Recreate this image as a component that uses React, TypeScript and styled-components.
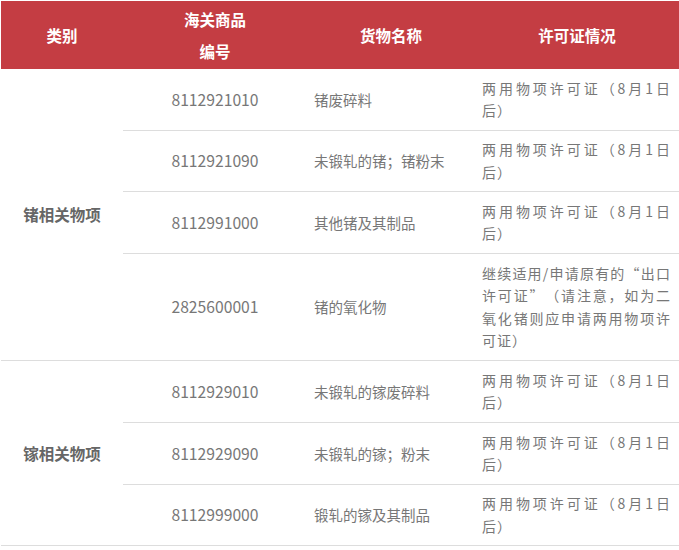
import React from "react";
import styled, { createGlobalStyle } from "styled-components";

const Global = createGlobalStyle`
  html, body { margin: 0; padding: 0; background: #fff; }
  body { font-family: "Microsoft YaHei", "Noto Sans CJK SC", sans-serif; text-spacing-trim: space-all; }
`;

const Wrap = styled.div`
  padding: 1px 0 0 1px;
  width: 679px;
  box-sizing: border-box;
`;

const Table = styled.table`
  width: 678px;
  border-collapse: collapse;
  table-layout: fixed;
`;

const HeadCell = styled.th`
  background: #c43d43;
  color: #fff;
  font-weight: bold;
  font-size: 15.5px;
  line-height: 32px;
  height: 68px;
  padding: 0;
  text-align: center;
  vertical-align: middle;
`;

const CatCell = styled.td`
  text-align: center;
  vertical-align: middle;
  font-weight: bold;
  font-size: 15.5px;
  color: #666;
  border-bottom: 1px solid #ddd;
  padding: 0;
`;

const CodeCell = styled.td`
  text-align: center;
  vertical-align: middle;
  font-size: 15.7px;
  color: #777;
  border-bottom: 1px solid #ddd;
  padding: 7px 0;
`;

const NameCell = styled.td`
  text-align: left;
  vertical-align: middle;
  font-size: 14.5px;
  color: #777;
  border-bottom: 1px solid #ddd;
  padding: 7px 6px 7px 7px;
`;

const LicCell = styled.td`
  text-align: justify;
  vertical-align: middle;
  font-family: "Noto Sans CJK SC", sans-serif;
  font-size: 14px;
  letter-spacing: 1px;
  line-height: 22.5px;
  text-spacing-trim: space-all;
  color: #777;
  border-bottom: 1px solid #ddd;
  padding: 7px 8px 7px 7px;
`;

const LIC = "两用物项许可证（8月1日后）";

type Item = { code: string; name: string; lic: string; h: number };

const groups: { cat: string; items: Item[] }[] = [
  {
    cat: "锗相关物项",
    items: [
      { code: "8112921010", name: "锗废碎料", lic: LIC, h: 61 },
      { code: "8112921090", name: "未锻轧的锗；锗粉末", lic: LIC, h: 61 },
      { code: "8112991000", name: "其他锗及其制品", lic: LIC, h: 62 },
      {
        code: "2825600001",
        name: "锗的氧化物",
        lic: "继续适用/申请原有的“出口许可证”（请注意，如为二氧化锗则应申请两用物项许可证）",
        h: 107,
      },
    ],
  },
  {
    cat: "镓相关物项",
    items: [
      { code: "8112929010", name: "未锻轧的镓废碎料", lic: LIC, h: 62 },
      { code: "8112929090", name: "未锻轧的镓；粉末", lic: LIC, h: 62 },
      { code: "8112999000", name: "锻轧的镓及其制品", lic: LIC, h: 61 },
    ],
  },
];

export default function App() {
  return (
    <Wrap>
      <Global />
      <Table>
        <colgroup>
          <col style={{ width: 122 }} />
          <col style={{ width: 184 }} />
          <col style={{ width: 168 }} />
          <col style={{ width: 204 }} />
        </colgroup>
        <thead>
          <tr>
            <HeadCell>类别</HeadCell>
            <HeadCell>
              海关商品
              <br />
              编号
            </HeadCell>
            <HeadCell>货物名称</HeadCell>
            <HeadCell>许可证情况</HeadCell>
          </tr>
        </thead>
        <tbody>
          {groups.map((g) =>
            g.items.map((it, i) => (
              <tr key={it.code} style={{ height: it.h }}>
                {i === 0 && <CatCell rowSpan={g.items.length}>{g.cat}</CatCell>}
                <CodeCell>{it.code}</CodeCell>
                <NameCell>{it.name}</NameCell>
                <LicCell>{it.lic}</LicCell>
              </tr>
            ))
          )}
        </tbody>
      </Table>
    </Wrap>
  );
}
